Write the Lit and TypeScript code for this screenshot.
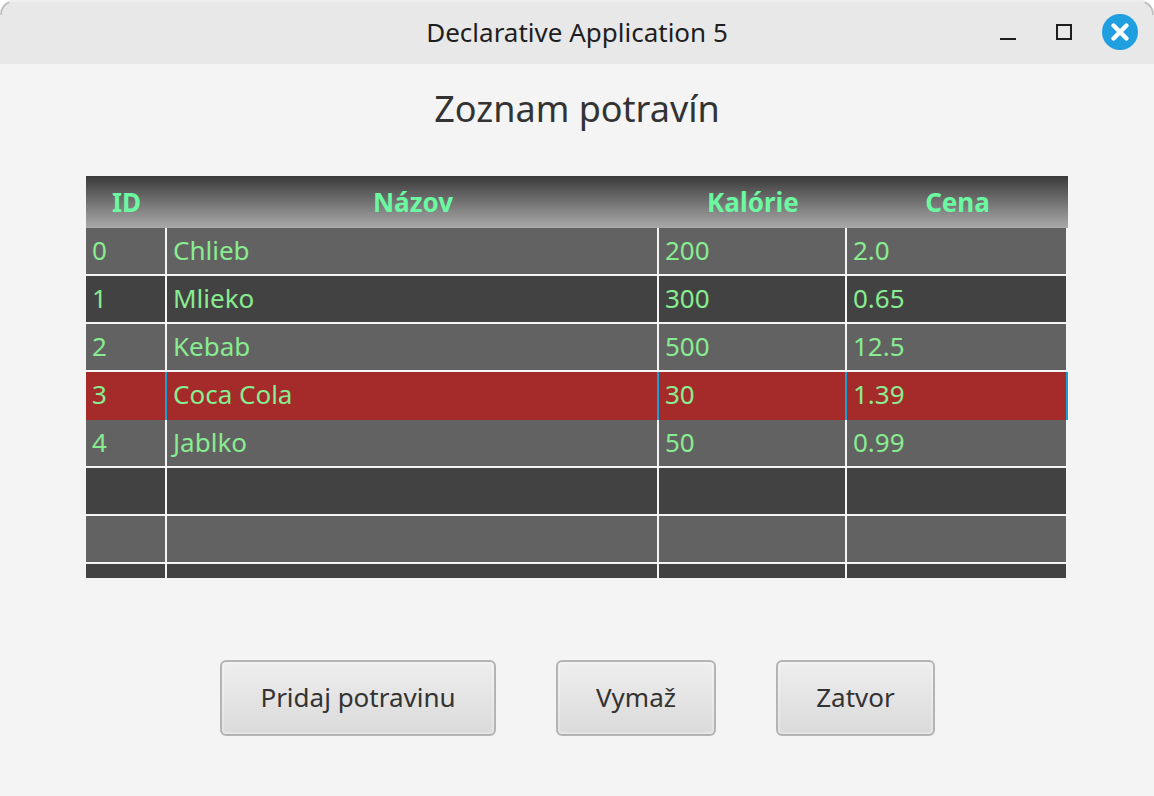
import { LitElement, html, css } from "lit";
import { customElement } from "lit/decorators.js";

const rows: string[][] = [
  ["0", "Chlieb", "200", "2.0"],
  ["1", "Mlieko", "300", "0.65"],
  ["2", "Kebab", "500", "12.5"],
  ["3", "Coca Cola", "30", "1.39"],
  ["4", "Jablko", "50", "0.99"],
  ["", "", "", ""],
  ["", "", "", ""],
  ["", "", "", ""],
];

@customElement("app-root")
export class AppRoot extends LitElement {
  static styles = css`
    :host {
      display: block;
      width: 1154px;
      height: 796px;
      font-family: "Noto Sans", "Open Sans", sans-serif;
      background: #ffffff;
      overflow: hidden;
    }
    .window {
      position: relative;
      width: 1154px;
      height: 796px;
      display: flex;
      flex-direction: column;
      background: #f4f4f4;
      border-radius: 14px 14px 0 0;
      overflow: hidden;
    }
    .corner {
      position: absolute;
      top: 0;
      width: 16px;
      height: 16px;
      display: block;
    }
    .corner.l { left: 0; }
    .corner.r { right: 0; transform: scaleX(-1); }
    .titlebar {
      height: 64px;
      flex: none;
      box-sizing: border-box;
      background: #e8e8e8;
      box-shadow: inset 0 2px 0 #efefef;
      display: grid;
      grid-template-columns: 1fr auto 1fr;
      align-items: center;
      color: #1e1e1e;
      font-size: 26px;
    }
    .wintitle {
      grid-column: 2;
      text-align: center;
      line-height: 64px;
      height: 64px;
      margin-top: -1px;
    }
    .controls {
      grid-column: 3;
      display: flex;
      justify-content: flex-end;
      align-items: center;
      padding-right: 16px;
      padding-top: 0;
    }
    .min {
      width: 16px;
      height: 16px;
      margin-right: 40px;
    }
    .min svg, .max svg, .close svg { display: block; }
    .max {
      width: 16px;
      height: 16px;
      margin-right: 30px;
    }
    .close {
      width: 36px;
      height: 36px;
    }
    .content {
      flex: 1;
      display: flex;
      flex-direction: column;
      align-items: stretch;
    }
    h1 {
      margin: 0;
      height: 112px;
      font-weight: 400;
      font-size: 36px;
      line-height: 90px;
      text-align: center;
      color: #333333;
    }
    .table {
      margin-left: 86px;
      width: 982px;
      height: 402px;
      overflow: hidden;
    }
    .head {
      height: 52px;
      display: grid;
      grid-template-columns: 81px 492px 188px 221px;
      background: linear-gradient(to bottom, #3a3a3a, #aaaaaa);
      color: #6cf8a0;
      font-weight: 700;
      font-size: 26px;
    }
    .head div {
      text-align: center;
      line-height: 52px;
    }
    .row {
      height: 48px;
      display: grid;
      grid-template-columns: 81px 492px 188px 219px;
      color: #88ec90;
      font-size: 26px;
    }
    .cell {
      box-sizing: border-box;
      border-right: 2px solid #f4f4f4;
      border-bottom: 2px solid #f4f4f4;
      padding-left: 6px;
      line-height: 45px;
      white-space: nowrap;
    }
    .cell:last-child { border-right: 0; }
    .odd .cell { background: #626262; }
    .even .cell { background: #424242; }
    .row.sel .cell {
      background: #a52a2a;
      border-bottom: 0;
      border-right: 2px solid #1b9ed8;
    }
    .row.sel { grid-template-columns: 81px 492px 188px 221px; }
    .actions {
      margin-top: 82px;
      display: flex;
      margin-left: 220px;
    }
    button {
      height: 76px;
      box-sizing: border-box;
      border: 2px solid #b4b4b4;
      border-radius: 6px;
      background: linear-gradient(to bottom, #eeeeee, #dadada);
      box-shadow: inset 0 0 0 2px rgba(255, 255, 255, 0.25);
      font-family: inherit;
      font-size: 26px;
      color: #333333;
      padding: 0 0 2px;
    }
    .b1 { width: 276px; margin-right: 60px; }
    .b2 { width: 160px; margin-right: 60px; }
    .b3 { width: 159px; }
  `;

  render() {
    const arc = (side: string) => html`<svg class="corner ${side}" viewBox="0 0 16 16">
      <path d="M1 15 A14 14 0 0 1 15 1" fill="none" stroke="#bcbcbc" stroke-width="1.5" stroke-dasharray="16 40"></path>
    </svg>`;
    return html`
      <div class="window">
        <div class="titlebar">
          <div class="wintitle">Declarative Application 5</div>
          <div class="controls">
            <div class="min">
              <svg width="16" height="16" viewBox="0 0 16 16"><rect x="0" y="14" width="16" height="2" fill="#1e1e1e"></rect></svg>
            </div>
            <div class="max">
              <svg width="16" height="16" viewBox="0 0 16 16"><rect x="1" y="1" width="14" height="14" fill="none" stroke="#1e1e1e" stroke-width="2"></rect></svg>
            </div>
            <div class="close">
              <svg width="36" height="36" viewBox="0 0 36 36">
                <circle cx="18" cy="18" r="18" fill="#1f9fe0"></circle>
                <path d="M11.5 11.5 L24.5 24.5 M24.5 11.5 L11.5 24.5" stroke="#fff" stroke-width="4.4" stroke-linecap="round"></path>
              </svg>
            </div>
          </div>
        </div>
        <div class="content">
          <h1>Zoznam potravín</h1>
          <div class="table">
            <div class="head"><div>ID</div><div>Názov</div><div>Kalórie</div><div>Cena</div></div>
            ${rows.map(
              (r, i) => html`<div class="row ${i % 2 ? "even" : "odd"} ${i === 3 ? "sel" : ""}">
                ${r.map((c) => html`<div class="cell">${c}</div>`)}
              </div>`
            )}
          </div>
          <div class="actions">
            <button class="b1">Pridaj potravinu</button>
            <button class="b2">Vymaž</button>
            <button class="b3">Zatvor</button>
          </div>
        </div>
        ${arc("l")}${arc("r")}
      </div>
    `;
  }
}
